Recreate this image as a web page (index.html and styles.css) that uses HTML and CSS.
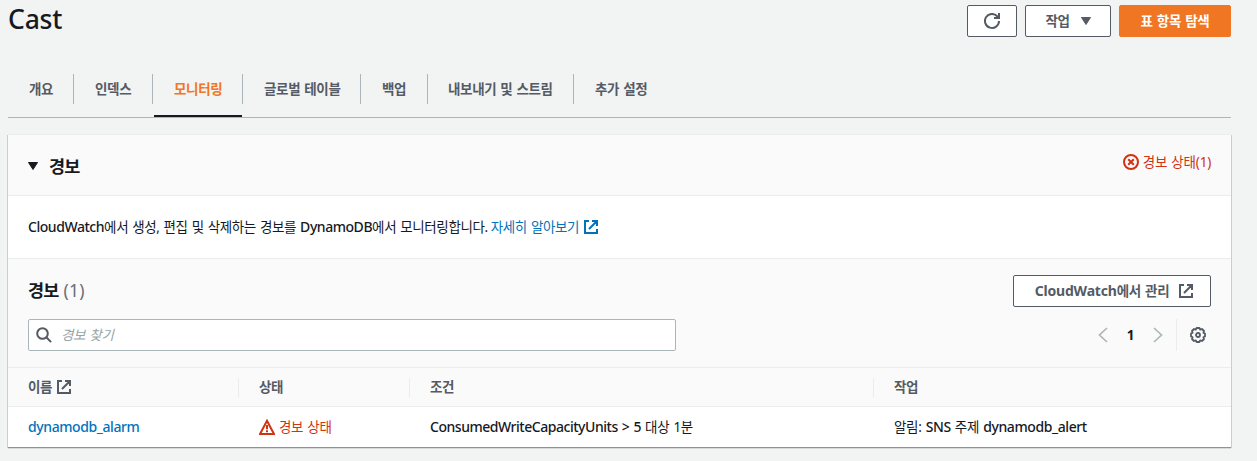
FILE: index.html
```html
<!DOCTYPE html>
<html lang="ko">
<head>
<meta charset="utf-8">
<title>Cast</title>
<link rel="stylesheet" href="styles.css">
</head>
<body>
<svg width="0" height="0" class="defs">
  <symbol id="external" viewBox="0 0 16 16"><path d="M6 2H2v12h12v-4M9 2h5v5M14 2 6 10" fill="none" stroke="currentColor" stroke-width="2"/></symbol>
</svg>
<main class="page">
  <header class="page-header">
    <h1 class="title">Cast</h1>
    <div class="actions">
      <button class="btn btn-icon" aria-label="새로 고침"><svg class="icon" viewBox="0 0 16 16"><path d="M15 8a7 7 0 1 1-1.6-4.5L14.6 5M15 0v5h-5" fill="none" stroke="currentColor" stroke-width="2"/></svg></button>
      <button class="btn btn-menu"><span>작업</span><svg class="caret" viewBox="0 0 10 8"><path d="M.5.5h9L5 7.5z" fill="currentColor" stroke="currentColor" stroke-linejoin="round"/></svg></button>
      <button class="btn btn-primary">표 항목 탐색</button>
    </div>
  </header>
  <nav class="tabs">
    <a class="tab tab-overview"><span>개요</span></a>
    <a class="tab tab-index"><span>인덱스</span></a>
    <a class="tab tab-monitor active"><span>모니터링</span></a>
    <a class="tab tab-global"><span>글로벌 테이블</span></a>
    <a class="tab tab-backup"><span>백업</span></a>
    <a class="tab tab-export"><span>내보내기 및 스트림</span></a>
    <a class="tab tab-settings"><span>추가 설정</span></a>
  </nav>
  <section class="panel">
    <div class="panel-header">
      <h2 class="heading"><svg class="caret" viewBox="0 0 10 8"><path d="M.5.5h9L5 7.5z" fill="currentColor" stroke="currentColor" stroke-linejoin="round"/></svg>경보</h2>
      <div class="status"><svg class="icon" viewBox="0 0 16 16"><g fill="none" stroke="currentColor" stroke-width="2"><circle cx="8" cy="8" r="7"/><path d="m5.2 5.2 5.6 5.6M10.8 5.2l-5.6 5.6"/></g></svg><span class="status-count">경보 상태(1)</span></div>
    </div>
    <div class="description"><span class="desc-text"><span class="latin">CloudWatch</span>에서 생성, 편집 및 삭제하는 경보를 <span class="latin">DynamoDB</span>에서 모니터링합니다.</span><a class="link"><span class="learn">자세히 알아보기</span><svg class="icon"><use href="#external"/></svg></a></div>
    <div class="tools">
      <div class="tools-row">
        <h2 class="heading">경보 <span class="counter">(1)</span></h2>
        <button class="btn btn-manage"><span><span class="latin">CloudWatch</span>에서 관리</span><svg class="icon"><use href="#external"/></svg></button>
      </div>
      <div class="tools-row filter-row">
        <div class="search"><svg class="icon" viewBox="0 0 16 16"><g fill="none" stroke="currentColor" stroke-width="2"><circle cx="6.5" cy="6.5" r="5.3"/><path d="m10.3 10.3 4.8 4.8"/></g></svg><span class="placeholder">경보 찾기</span></div>
        <div class="paging">
          <svg class="icon arrow" viewBox="0 0 16 16"><path d="M12 1 4.5 8l7.5 7" fill="none" stroke="currentColor" stroke-width="1.7"/></svg>
          <span class="page-number">1</span>
          <svg class="icon arrow" viewBox="0 0 16 16"><path d="m4 1 7.5 7L4 15" fill="none" stroke="currentColor" stroke-width="1.7"/></svg>
          <span class="settings"><svg class="icon" viewBox="0 0 16 16"><g fill="none" stroke="currentColor"><path d="M6.6 1h2.8l.8 1.6 1.8-.6 2 2-.6 1.8 1.6.8v2.8l-1.6.8.6 1.8-2 2-1.8-.6-.8 1.6H6.6l-.8-1.6-1.8.6-2-2 .6-1.8L1 9.4V6.6l1.6-.8L2 4l2-2 1.8.6z" stroke-width="1.8" stroke-linejoin="round"/><circle cx="8" cy="8" r="2" stroke-width="1.8"/></g></svg></span>
        </div>
      </div>
    </div>
    <div class="grid-row grid-head">
      <div class="cell"><span>이름</span><svg class="icon"><use href="#external"/></svg></div>
      <div class="cell">상태</div>
      <div class="cell">조건</div>
      <div class="cell">작업</div>
    </div>
    <div class="grid-row grid-body">
      <div class="cell"><a class="link name">dynamodb_alarm</a></div>
      <div class="cell alarm"><svg class="icon" viewBox="0 0 16 16"><path d="M8 1.8 15 15H1z" fill="none" stroke="currentColor" stroke-width="2"/><path d="M8 6v4.2M8 11.2v2" stroke="currentColor" stroke-width="2"/></svg><span>경보 상태</span></div>
      <div class="cell"><span><span class="latin condition">ConsumedWriteCapacityUnits &gt; 5</span> 대상 1분</span></div>
      <div class="cell"><span>알림: <span class="latin">SNS</span> 주제 <span class="latin">dynamodb_alert</span></span></div>
    </div>
  </section>
</main>
</body>
</html>
```
FILE: styles.css
```css
* { box-sizing: border-box; }
body {
  margin: 0;
  min-height: 461px;
  background: #f2f3f3;
  color: #16191f;
  font: 13.5px/22px "Noto Sans", "Noto Sans CJK KR", sans-serif;
  letter-spacing: -0.3px;
  word-spacing: 0.9px;
}
.defs { display: block; }
.page { width: 1231px; padding-left: 8px; }
.icon { width: 16px; height: 16px; flex: none; }
.latin, .name { font-size: 14px; font-weight: 500; letter-spacing: -0.4px; }
.btn .latin { font-weight: 700; letter-spacing: -0.2px; }
.latin.condition { letter-spacing: -0.47px; }
.page-header { display: flex; justify-content: space-between; height: 74px; padding-top: 5px; }
.title { margin: -4px 0 0; font-size: 26.5px; line-height: 36px; font-weight: 500; letter-spacing: -0.2px; }
.actions { display: flex; gap: 8px; }
.btn {
  display: flex; align-items: center; justify-content: center;
  height: 32px; padding: 0;
  border: 1px solid #545b64; border-radius: 2px;
  background: #fff; color: #545b64;
  font: inherit; font-weight: 700; letter-spacing: -0.3px; word-spacing: 0.9px;
}
.btn-icon { width: 50px; }
.btn-menu { width: 86px; gap: 11px; }
.btn-primary { width: 112px; border-color: #f07624; background: #f07624; color: #fff; }
.caret { width: 10px; height: 8px; }
.tabs { display: flex; height: 44px; border-bottom: 1px solid #aab7b8; }
.tab {
  position: relative; height: 30px; padding-left: 21px;
  border-right: 1px solid #aab7b8;
  color: #545b64; font-weight: 700; line-height: 30px; letter-spacing: -0.35px; white-space: nowrap;
}
.tab-overview { width: 66px; }
.tab-index { width: 79px; }
.tab-monitor { width: 90px; }
.tab-global { width: 118px; }
.tab-backup { width: 67px; }
.tab-export { width: 146px; padding-left: 20px; }
.tab-settings { border: 0; }
.tab.active { color: #f07624; }
.tab.active::after { content: ""; position: absolute; left: 1px; right: 0; top: 41px; height: 2px; background: #16191f; }
.panel { margin-top: 17px; height: 313px; background: #fff; border-bottom: 1px solid #879596; box-shadow: -1px 0 0 #c9cfcf, 1px 0 0 #c9cfcf, 0 -1px 0 #eaeded, 0 1px 0 #d5dbdb; }
.panel-header { display: flex; justify-content: space-between; height: 61px; padding: 19px 20px 0; background: #fafafa; border-bottom: 1px solid #eaeded; }
.heading { display: flex; align-items: center; gap: 11px; height: 24px; margin: 0; font-size: 17.5px; line-height: 22px; font-weight: 700; letter-spacing: -0.8px; }
.counter { color: #687078; font-weight: 400; letter-spacing: 0.2px; }
.status, .alarm { display: flex; color: #d13212; gap: 4px; }
.status { height: 16px; align-items: center; letter-spacing: -0.2px; }
.description { display: flex; align-items: center; height: 63px; padding: 0 20px; border-bottom: 1px solid #eaeded; gap: 3px; white-space: nowrap; letter-spacing: -0.38px; }
.description .latin { letter-spacing: -0.45px; }
.link { display: flex; align-items: center; gap: 4px; color: #0073bb; }
.tools { height: 108px; padding: 16px 20px 0; background: #fafafa; }
.tools-row { display: flex; justify-content: space-between; align-items: center; height: 32px; }
.tools .heading { gap: 5px; margin-top: -2px; }
.filter-row { margin-top: 12px; }
.btn-manage { width: 198px; padding-left: 5px; gap: 9px; }
.search { display: flex; align-items: center; width: 648px; height: 32px; padding-left: 7px; gap: 9px; border: 1px solid #aab7b8; border-radius: 2px; background: #fff; color: #545b64; }
.placeholder { color: #95a5a6; font-style: italic; }
.paging { display: flex; align-items: center; height: 32px; color: #aab7b8; }
.page-number { width: 39px; text-align: center; color: #16191f; font-weight: 700; }
.settings { display: flex; align-items: center; height: 32px; margin-left: 10px; padding: 0 5px 0 13px; border-left: 1px solid #eaeded; color: #545b64; }
.grid-row { display: grid; grid-template-columns: 231px 171px 464px 1fr; height: 40px; align-items: center; white-space: nowrap; }
.cell { display: flex; align-items: center; padding-left: 20px; gap: 4px; }
.grid-head { border-top: 1px solid #eaeded; border-bottom: 1px solid #eaeded; background: #fafafa; color: #545b64; font-weight: 700; }
.grid-head .cell { height: 19px; border-right: 1px solid #eaeded; }
.grid-head .cell:last-child { border: 0; }
```
